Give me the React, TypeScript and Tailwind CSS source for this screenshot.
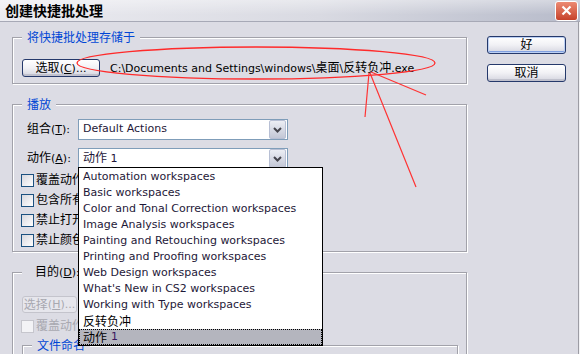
import type { ReactNode } from "react";

// --------------------
// Small helpers
// --------------------
type Props = { children?: ReactNode; className?: string };

const FONT = "font-['DejaVu_Sans','Noto_Sans_CJK_SC',sans-serif]";

const listItems = [
  "Automation workspaces",
  "Basic workspaces",
  "Color and Tonal Correction workspaces",
  "Image Analysis workspaces",
  "Painting and Retouching workspaces",
  "Printing and Proofing workspaces",
  "Web Design workspaces",
  "What's New in CS2 workspaces",
  "Working with Type workspaces",
];

function Cjk({ children, className = "" }: Props) {
  return <span className={`text-[12px] ${className}`}>{children}</span>;
}

function Key({ k }: { k: string }) {
  return <span className="underline underline-offset-[1px]">{k}</span>;
}

function XpButton({
  children,
  primary = false,
  disabled = false,
  className = "",
}: Props & { primary?: boolean; disabled?: boolean }) {
  const look = disabled
    ? "border-[#c4c4cc] bg-[#e6e6ec] text-[#a8a8b0]"
    : primary
    ? "border-[#25396b] bg-linear-to-b from-white via-[#f1f1f5] to-[#d4d5df] shadow-[inset_0_0_0_1px_#bcd0f4,inset_0_-2px_0_#7f9fe0]"
    : "border-[#25396b] bg-linear-to-b from-white via-[#f1f1f5] to-[#d4d5df] shadow-[inset_0_-2px_0_#c0c1cd]";
  return (
    <div
      className={`flex items-center justify-center rounded-[3px] border leading-none ${look} ${className}`}
    >
      {children}
    </div>
  );
}

function GroupBox({
  title,
  titleClass = "",
  children,
  className = "",
}: Props & { title: ReactNode; titleClass?: string }) {
  return (
    <div
      className={`border border-[#a2a2aa] shadow-[inset_1px_1px_0_#fff,1px_1px_0_#fff] ${className}`}
    >
      <div className={`w-fit bg-[#dcdce4] ${titleClass}`}>{title}</div>
      {children}
    </div>
  );
}

function Combo({ children }: Props) {
  return (
    <div className="flex h-[21px] w-[210px] items-center border border-[#7f9db9] bg-white">
      <span className="flex-1 whitespace-nowrap pl-[4px] text-[#1e1838]">{children}</span>
      <div className="mr-px flex h-[19px] w-[17px] items-center justify-center rounded-[2px] border border-[#b7bfd4] bg-linear-to-b from-[#eceef4] to-[#c3c7d6]">
        <svg width="9" height="6" viewBox="0 0 9 6">
          <path d="M1 1 L4.5 4.5 L8 1" stroke="#45454d" strokeWidth="2" fill="none" />
        </svg>
      </div>
    </div>
  );
}

function Check({ label, disabled = false }: { label: ReactNode; disabled?: boolean }) {
  return (
    <div className="flex h-[13px] items-center">
      <span
        className={
          disabled
            ? "h-[13px] w-[13px] shrink-0 border border-[#c6c6cd] bg-[#f3f3f6]"
            : "h-[13px] w-[13px] shrink-0 border border-[#1c5180] bg-linear-to-br from-[#d8d8de] to-white"
        }
      />
      <span className={`ml-[2px] whitespace-nowrap ${disabled ? "text-[#a8a8b0]" : ""}`}>
        {label}
      </span>
    </div>
  );
}

// --------------------
// Dialog
// --------------------
export default function App() {
  return (
    <div
      className={`relative h-[354px] w-[580px] overflow-hidden bg-[#dcdce4] text-[11px] text-black ${FONT} shadow-[inset_-1px_0_0_#f2f2f5,inset_-2px_0_0_#9c9ca4]`}
    >
      {/* Title bar */}
      <div className="flex h-[22px] items-center justify-between border-b border-[#a7a9b6] bg-[linear-gradient(to_bottom,rgba(255,255,255,0.4),rgba(255,255,255,0)_70%),linear-gradient(to_right,#ececf1,#d9dae2_55%,#b7bbca)] pl-[5px] pr-[2px]">
        <span className="text-[14px] font-bold leading-none">创建快捷批处理</span>
        <div className="flex h-[20px] w-[23px] items-center justify-center rounded-[3px] border border-white bg-linear-to-b from-[#ec8a73] to-[#c6412a]">
          <svg width="11" height="11" viewBox="0 0 11 11">
            <path d="M1.5 1.5 L9.5 9.5 M9.5 1.5 L1.5 9.5" stroke="#fff" strokeWidth="2.2" />
          </svg>
        </div>
      </div>

      <div className="flex">
        {/* Left column: group boxes */}
        <div className="ml-[12px] w-[455px]">
          {/* Save droplet in */}
          <GroupBox
            className="mt-[15px] h-[47px]"
            titleClass="-mt-[7px] ml-[9px] px-[5px] leading-[14px]"
            title={<Cjk className="text-[#0046d5]">将快捷批处理存储于</Cjk>}
          >
            <div className="mt-[13px] flex items-center pl-[9px]">
              <XpButton className="h-[18px] w-[78px]">
                <Cjk>选取</Cjk>(<Key k="C" />)...
              </XpButton>
              <span className="ml-[10px] whitespace-nowrap">
                {"C:\\Documents and Settings\\windows\\"}
                <Cjk>桌面</Cjk>
                {"\\"}
                <Cjk>反转负冲</Cjk>.exe
              </span>
            </div>
          </GroupBox>

          {/* Play */}
          <GroupBox
            className="mt-[20px] h-[148px]"
            titleClass="-mt-[7px] ml-[9px] px-[5px] leading-[14px]"
            title={<Cjk className="text-[#0046d5]">播放</Cjk>}
          >
            <div className="mt-[6px] flex flex-col gap-[8px] pl-[8px]">
              <div className="flex items-center">
                <span className="w-[57px] pl-[6px] whitespace-nowrap">
                  <Cjk>组合</Cjk>(<Key k="T" />):
                </span>
                <Combo>Default Actions</Combo>
              </div>
              <div className="flex items-center">
                <span className="w-[57px] pl-[6px] whitespace-nowrap">
                  <Cjk>动作</Cjk>(<Key k="A" />):
                </span>
                <Combo>
                  <Cjk>动作</Cjk> 1
                </Combo>
              </div>
            </div>
            <div className="mt-[5px] flex flex-col gap-[7px] pl-[8px]">
              <Check label={<Cjk>覆盖动作中的“打开”命令</Cjk>} />
              <Check label={<Cjk>包含所有子文件夹</Cjk>} />
              <Check label={<Cjk>禁止打开文件选项对话框</Cjk>} />
              <Check label={<Cjk>禁止颜色配置文件警告</Cjk>} />
            </div>
          </GroupBox>

          {/* Destination */}
          <GroupBox
            className="mt-[20px] h-[140px]"
            titleClass="-mt-[11px] ml-[9px] flex h-[21px] items-center"
            title={
              <>
                <span className="w-[56px] pl-[13px] whitespace-nowrap">
                  <Cjk>目的</Cjk>(<Key k="D" />):
                </span>
                <Combo>
                  <Cjk>无</Cjk>
                </Combo>
              </>
            }
          >
            <div className="mt-[13px] flex flex-col pl-[9px]">
              <XpButton disabled className="h-[17px] w-[55px]">
                <Cjk>选择</Cjk>(<Key k="H" />)...
              </XpButton>
              <div className="mt-[7px] -ml-px">
                <Check disabled label={<Cjk>覆盖动作中的“存储为”命令</Cjk>} />
              </div>
              <GroupBox
                className="mt-[12px] h-[60px] w-[436px]"
                titleClass="-mt-[7px] ml-[9px] px-[5px] leading-[14px]"
                title={<Cjk className="text-[#0046d5]">文件命名</Cjk>}
              />
            </div>
          </GroupBox>
        </div>

        {/* Right column: OK / Cancel */}
        <div className="ml-[20px] mt-[14px] flex flex-col gap-[10px]">
          <XpButton primary className="h-[18px] w-[79px]">
            <Cjk>好</Cjk>
          </XpButton>
          <XpButton className="h-[18px] w-[79px]">
            <Cjk>取消</Cjk>
          </XpButton>
        </div>
      </div>

      {/* Open combo list */}
      <div className="absolute left-[78px] top-[167px] w-[245px] border border-black bg-white pt-px">
        {listItems.map((item) => (
          <div key={item} className="flex h-[16px] items-center whitespace-nowrap pl-[4px] pt-px text-[#1e1838]">
            {item}
          </div>
        ))}
        <div className="flex h-[16px] items-center pl-[4px] pt-px">
          <Cjk>反转负冲</Cjk>
        </div>
        <div className="flex h-[16px] items-center border border-dotted border-black bg-[#b4b5be] pl-[3px] pt-px">
          <Cjk>动作</Cjk>
          <span className="ml-[4px] text-[#3a1760]">1</span>
        </div>
      </div>

      {/* Red annotation */}
      <svg className="pointer-events-none absolute left-0 top-0" width="580" height="354">
        <ellipse cx="256" cy="63" rx="179" ry="16" fill="none" stroke="#ff2a2a" strokeWidth="1.3" />
        <path
          d="M369 73 L365 117 M370 73 L416 187 M371 72 L426 95"
          fill="none"
          stroke="#ff3434"
          strokeWidth="1.2"
        />
      </svg>
    </div>
  );
}
